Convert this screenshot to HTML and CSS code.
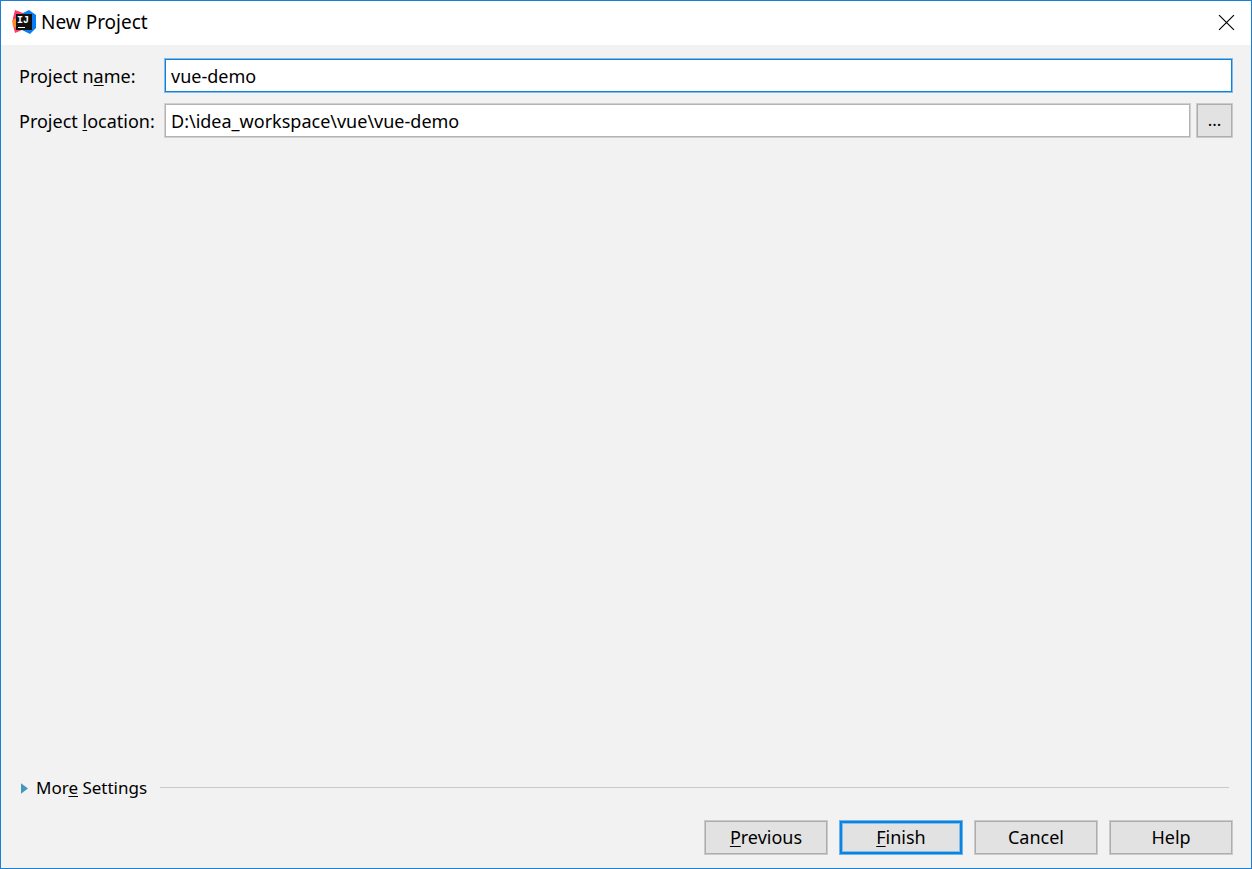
FILE: index.html
```html
<!DOCTYPE html>
<html lang="en">
<head>
    <meta charset="UTF-8">
    <meta name="viewport" content="width=device-width, initial-scale=1.0">
    <title>New Project</title>
    <link rel="stylesheet" href="styles.css">
</head>
<body>
    <div class="dialog">
        <!-- Title bar -->
        <header class="titlebar">
            <svg class="app-icon" viewBox="0 0 24 24" aria-hidden="true">
                <path d="M3 0 L11 3 L13 8 L10 20 L3 23 L1 15 L1 8 Z" fill="#fb3c64"/>
                <path d="M0 10 L5 8 L5 18 L1 17 Z" fill="#fb8a2c"/>
                <path d="M11 3 L17 0 L24 5 L24 18 L18 24 L10 20 Z" fill="#0a7cf2"/>
                <rect x="4" y="4" width="16" height="16" fill="#111"/>
                <text class="app-icon-text" x="5" y="13">IJ</text>
                <rect x="6" y="17" width="7" height="1" fill="#fff"/>
            </svg>
            <h1>New Project</h1>
            <button type="button" class="close" aria-label="Close">
                <svg viewBox="0 0 16 16" aria-hidden="true">
                    <path d="M1 1 L15 15 M15 1 L1 15" stroke="#000" stroke-width="1.1" fill="none"/>
                </svg>
            </button>
        </header>

        <form class="content">
            <!-- Project fields -->
            <div class="field">
                <label for="projectName">Project n<u>a</u>me:</label>
                <input type="text" id="projectName" class="active" value="vue-demo" spellcheck="false">
            </div>
            <div class="field">
                <label for="projectLocation">Project <u>l</u>ocation:</label>
                <input type="text" id="projectLocation" value="D:\idea_workspace\vue\vue-demo" spellcheck="false">
                <button type="button" class="btn browse" aria-label="Browse">...</button>
            </div>

            <!-- Collapsed settings section -->
            <div class="more">
                <button type="button" class="more-toggle" aria-expanded="false">
                    <svg viewBox="0 0 8 12" aria-hidden="true">
                        <path d="M0 0 L8 6 L0 12 Z" fill="#4596bf"/>
                    </svg>
                    <span>Mor<u>e</u> Settings</span>
                </button>
                <span class="line"></span>
            </div>

            <div class="actions">
                <button type="button" class="btn"><span><u>P</u>revious</span></button>
                <button type="button" class="btn default"><span><u>F</u>inish</span></button>
                <button type="button" class="btn"><span>Cancel</span></button>
                <button type="button" class="btn"><span>Help</span></button>
            </div>
        </form>
    </div>
</body>
</html>
```

FILE: styles.css
```css
/* Basic styling for the page */
* {
    box-sizing: border-box;
}

body {
    margin: 0;
    font-family: "Noto Sans", "Open Sans", sans-serif;
    font-size: 18px;
    line-height: 24px;
    color: #000;
}

button,
input {
    font: inherit;
    color: inherit;
}

u {
    text-decoration-thickness: 1px;
    text-underline-offset: 2px;
    text-decoration-skip-ink: none;
}

.dialog {
    display: flex;
    flex-direction: column;
    min-height: 100vh;
    border: 1px solid #1a80d5;
    background-color: #f2f2f2;
}

/* Title bar */
.titlebar {
    display: flex;
    align-items: center;
    height: 44px;
    padding: 0 16px 2px 11px;
    background-color: #fff;
}

.titlebar h1 {
    margin: 0 auto 0 5px;
    font-size: 19px;
    font-weight: normal;
}

.app-icon {
    width: 24px;
    height: 24px;
}

.app-icon-text {
    font-family: "Liberation Mono", monospace;
    font-size: 10px;
    font-weight: bold;
    fill: #fff;
}

.close {
    display: flex;
    padding: 0;
    border: none;
    background: none;
}

.close svg {
    width: 17px;
    height: 17px;
}

/* Form */
.content {
    display: flex;
    flex: 1;
    flex-direction: column;
    gap: 10px;
    padding: 13px 18px;
}

.field {
    display: flex;
    align-items: center;
}

.field label {
    flex: none;
    width: 145px;
}

.field input {
    flex: 1;
    min-width: 0;
    height: 35px;
    padding: 0 6px;
    border: 1px solid #d0d0d0;
    outline: 1px solid #b4b4b4;
    outline-offset: -2px;
    background-color: #fff;
}

.field input.active {
    border-color: #80bdec;
    outline-color: #0f82d9;
}

/* Buttons */
.btn {
    width: 124px;
    height: 35px;
    padding: 0 0 2px;
    border: 1px solid #cacaca;
    outline: 1px solid #adadad;
    outline-offset: -2px;
    background-color: #e2e2e2;
}

.btn.default {
    border-color: #6bb4ec;
    outline: 2px solid #0a84e0;
    outline-offset: -3px;
    box-shadow: inset 0 0 0 3px #86bee8;
}

.btn.browse {
    width: 37px;
    margin-left: 5px;
    font-size: 17px;
}

/* More settings */
.more {
    display: flex;
    align-items: center;
    gap: 13px;
    margin-top: auto;
    padding-right: 4px;
}

.more-toggle {
    display: flex;
    align-items: center;
    gap: 8px;
    padding: 0 0 0 2px;
    border: none;
    background: none;
    font-size: 17px;
}

.more-toggle svg {
    width: 7px;
    height: 11px;
}

.line {
    flex: 1;
    height: 1px;
    margin-bottom: 2px;
    background-color: #c9c9c9;
}

.actions {
    display: flex;
    justify-content: flex-end;
    gap: 11px;
    margin-top: 10px;
}
```
